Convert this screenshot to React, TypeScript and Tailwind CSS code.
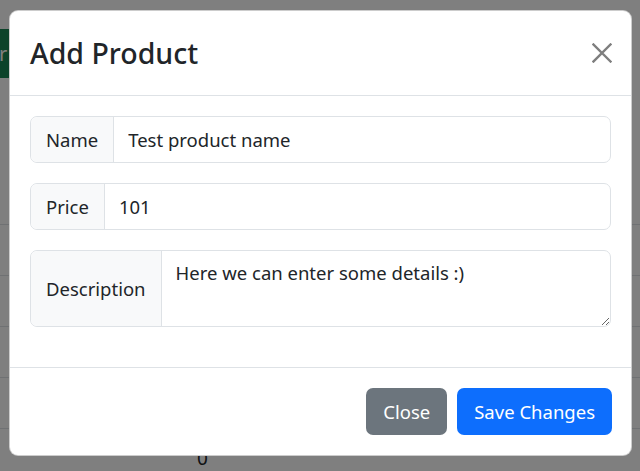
import React from "react";

const font = { fontFamily: '"Noto Sans", "Open Sans", sans-serif' };

function CloseIcon() {
  return (
    <svg width="20" height="20" viewBox="0 0 20 20" className="opacity-50">
      <path d="M1.5 1.5 L18.5 18.5 M18.5 1.5 L1.5 18.5" stroke="#000" strokeWidth="2.4" strokeLinecap="square" />
    </svg>
  );
}

export default function App() {
  return (
    <div className="relative h-[471px] w-[640px] overflow-hidden bg-white text-[#212529]" style={font}>
      {/* page behind the modal */}
      <div className="pt-[29px]">
        <div className="flex h-[49px] w-[120px] items-center bg-[#198754] text-[20px] text-white">
          <span className="-ml-[1px]">r</span>
        </div>
        <div className="mt-[146px] flex flex-col">
          <div className="h-[51px] border-t border-[#dee2e6]" />
          <div className="h-[51px] border-t border-[#dee2e6]" />
          <div className="h-[51px] border-t border-[#dee2e6]" />
          <div className="h-[51px] border-t border-[#dee2e6]" />
          <div className="h-[51px] border-t border-[#dee2e6] pl-[197px] pt-[19px] text-[19px] leading-[20px]">0</div>
        </div>
      </div>

      {/* backdrop + modal */}
      <div className="absolute inset-0 bg-black/50">
        <div className="ml-[9px] mt-[10px] w-[623px] overflow-hidden rounded-[9px] border border-black/20 bg-white">
          <div className="flex h-[85px] items-center justify-between border-b border-[#dee2e6] px-5">
            <h4 className="text-[28.5px] font-medium leading-[36px]">Add Product</h4>
            <div className="-mr-[1px] mt-[-1px]">
              <CloseIcon />
            </div>
          </div>

          <div className="flex flex-col gap-5 p-5 pb-10 text-[18.5px]">
            <div className="flex h-[47px] rounded-[7px] border border-[#dee2e6]">
              <span className="flex items-center rounded-l-[7px] border-r border-[#dee2e6] bg-[#f8f9fa] px-[15px]">Name</span>
              <input className="min-w-0 flex-1 rounded-r-[7px] px-[14px] outline-none" defaultValue="Test product name" />
            </div>
            <div className="flex h-[47px] rounded-[7px] border border-[#dee2e6]">
              <span className="flex items-center rounded-l-[7px] border-r border-[#dee2e6] bg-[#f8f9fa] px-[15px]">Price</span>
              <input className="min-w-0 flex-1 rounded-r-[7px] px-[14px] outline-none" defaultValue="101" />
            </div>
            <div className="flex h-[77px] rounded-[7px] border border-[#dee2e6]">
              <span className="flex items-center rounded-l-[7px] border-r border-[#dee2e6] bg-[#f8f9fa] px-[15px]">Description</span>
              <textarea
                className="min-w-0 flex-1 rounded-r-[7px] px-[14px] py-[7px] leading-[30px] outline-none"
                defaultValue="Here we can enter some details :)"
              />
            </div>
          </div>

          <div className="flex justify-end gap-[10px] border-t border-[#dee2e6] py-5 pl-5 pr-[19px] text-[18.5px] text-white">
            <button className="h-[47px] rounded-[7px] bg-[#6c757d] px-[17px]">Close</button>
            <button className="h-[47px] rounded-[7px] bg-[#0d6efd] px-[17px]">Save Changes</button>
          </div>
        </div>
      </div>
    </div>
  );
}
